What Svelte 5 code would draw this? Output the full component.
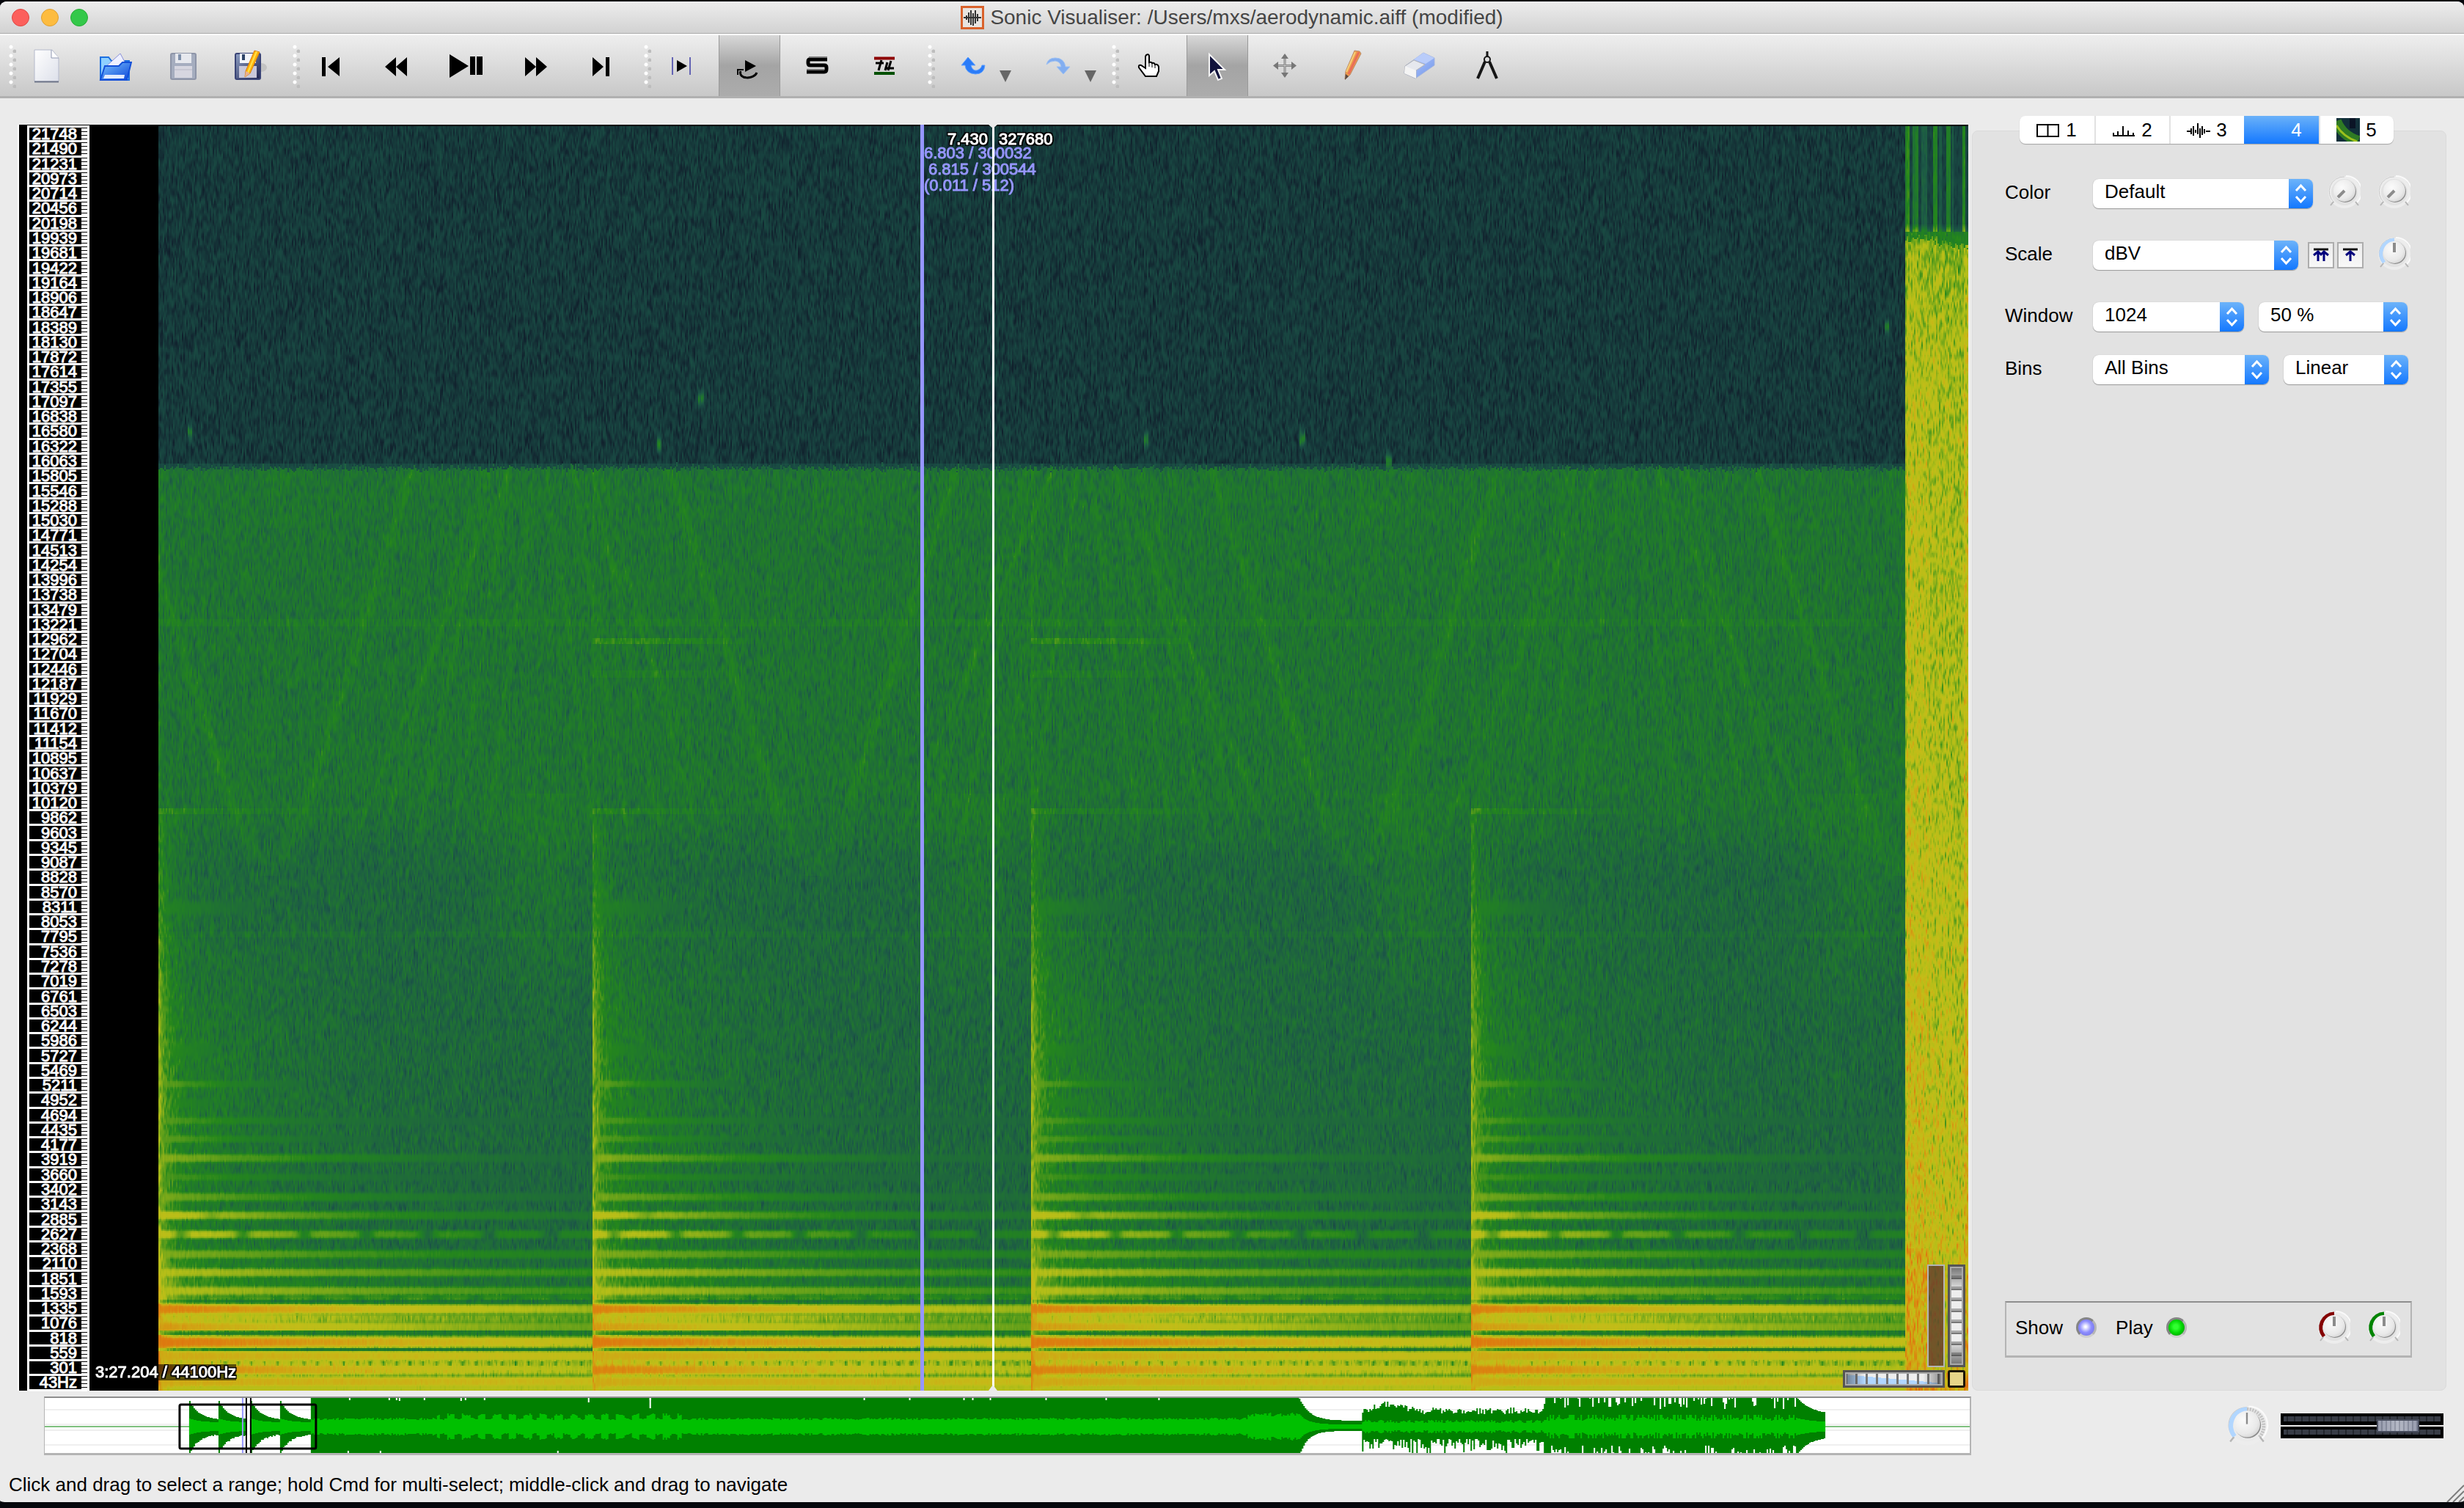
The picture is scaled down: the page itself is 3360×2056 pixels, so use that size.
<script lang="ts">
	import { onMount } from 'svelte';

	const FIRST_BIN = 505;
	const BIN_STEP = 6;
	const SAMPLE_RATE = 44100;
	const FFT_SIZE = 1024;

	const labels: string[] = [];
	for (let bin = FIRST_BIN; bin > 0; bin -= BIN_STEP) {
		labels.push(Math.floor((bin * SAMPLE_RATE) / FFT_SIZE) + (bin === 1 ? 'Hz' : ''));
	}

	const tabs = ['1', '2', '3', '4', '5'];
	let activeTab = $state('4');
	let looping = $state(true);
	let tool = $state('select');
	let showLayer = $state(true);
	let playLayer = $state(true);

	let canvas: HTMLCanvasElement;

	// small seeded generator so the view looks the same on every load
	function makeRandom(seed: number) {
		return () => {
			seed = (seed + 0x6d2b79f5) | 0;
			let t = Math.imul(seed ^ (seed >>> 15), 1 | seed);
			t = (t + Math.imul(t ^ (t >>> 7), 61 | t)) ^ t;
			return ((t ^ (t >>> 14)) >>> 0) / 4294967296;
		};
	}

	const colourStops: [number, number, number, number][] = [
		[0, 8, 10, 26],
		[0.2, 18, 38, 48],
		[0.3, 24, 68, 64],
		[0.4, 28, 88, 70],
		[0.47, 31, 106, 58],
		[0.53, 32, 122, 42],
		[0.59, 36, 134, 28],
		[0.7, 104, 162, 26],
		[0.8, 180, 190, 24],
		[0.86, 196, 188, 24],
		[0.92, 208, 166, 20],
		[0.97, 218, 134, 16],
		[1.05, 226, 104, 14]
	];

	function colourFor(v: number) {
		for (let i = 1; i < colourStops.length; i++) {
			const b = colourStops[i];
			if (v <= b[0]) {
				const a = colourStops[i - 1];
				const k = Math.max(0, (v - a[0]) / (b[0] - a[0]));
				return [a[1] + (b[1] - a[1]) * k, a[2] + (b[2] - a[2]) * k, a[3] + (b[3] - a[3]) * k];
			}
		}
		return [226, 104, 14];
	}

	// y, level at the hit, level at the end, decay, half height
	const partials = [
		[1237, 0.57, 0.44, 6, 10],
		[1431, 0.62, 0.44, 7, 9],
		[1462, 0.62, 0.44, 14, 6],
		[1477, 0.69, 0.45, 5, 5],
		[1503, 0.6, 0.45, 6, 6],
		[1527, 0.67, 0.46, 4, 5],
		[1552, 0.68, 0.45, 4, 5],
		[1578, 0.74, 0.45, 2.2, 6],
		[1604, 0.65, 0.45, 3, 5],
		[1631, 0.72, 0.46, 2.2, 6],
		[1656, 0.83, 0.48, 2, 6],
		[1682, 0.83, 0.5, 1.6, 6],
		[1709, 0.73, 0.5, 1.4, 6],
		[1734, 0.8, 0.54, 1.3, 6],
		[1759, 0.8, 0.55, 1.2, 6],
		[1769, 0.66, 0.55, 1, 5],
		[1784, 0.98, 0.64, 1, 7],
		[1796, 0.86, 0.58, 1.1, 6],
		[1808, 0.94, 0.62, 1.3, 7],
		[1829, 1, 0.78, 1.2, 8],
		[1848, 0.91, 0.82, 1.2, 8],
		[1859, 0.87, 0.72, 1.2, 6],
		[1867, 0.98, 0.7, 1.1, 7],
		[1883, 0.91, 0.85, 1.1, 8],
		[1893, 0.82, 0.79, 1, 8]
	];
	const hits = [216, 807, 1406, 2005, 2604];
	const blips = [[258, 588], [898, 605], [955, 543], [1562, 598], [1775, 598], [1893, 628], [2572, 445]];
	const thinSweeps = [[128, 0.42], [162, 0.27], [209, 0.19], [255, 0.15], [300, 0.13]];
	const tailStripes = [[2600, 0.6, 2], [2609, 0.5, 2], [2613, 0.54, 1], [2623, 0.42, 4], [2638, 0.57, 2], [2645, 0.4, 1], [2656, 0.54, 2], [2662, 0.4, 1], [2677, 0.58, 2]];

	function drawSpectrogram() {
		const w = 1281;
		const h = 863;
		canvas.width = w;
		canvas.height = h;
		const ctx = canvas.getContext('2d')!;
		const image = ctx.createImageData(w, h);
		const random = makeRandom(11);
		const binCount = 516;
		const raw = new Float32Array(w * binCount);
		for (let i = 0; i < raw.length; i++) {
			raw[i] = Math.max(-2.8, Math.log(-Math.log(random() + 1e-9) + 1e-9) + 0.4);
		}
		// neighbouring bins leak into each other, which stretches the grain vertically
		const noise = new Float32Array(raw.length);
		for (let i = w; i < raw.length - w; i++) {
			noise[i] = raw[i] * 0.6 + raw[i - w] * 0.4 + raw[i + w] * 0.4;
		}
		for (let px = 0; px < w; px++) {
			const x = 122 + px * 2;
			let hit = 0;
			while (hit < 3 && x >= hits[hit + 1]) hit++;
			const t = (x - hits[hit]) / 598;
			const band = x >= 2598;
			for (let py = 0; py < h; py++) {
				const y = 170 + py * 2;
				const o = (py * w + px) * 4;
				image.data[o + 3] = 255;
				if (x < 216 || py < 1) continue;

				const binPos = (py * 2) / 3.377;
				const bin = Math.floor(binPos);
				const k = binPos - bin;
				const n = noise[(bin + 1) * w + px] * (1 - k) + noise[(bin + 2) * w + px] * k;

				let v: number;
				let spread = 0.034;
				if (band) {
					if (y < 316) {
						v = 0.3;
						for (const [sx, level, half] of tailStripes) {
							if (Math.abs(x - sx) <= half) v = Math.max(v, level);
						}
						v += Math.max(0, y - 304) * 0.015;
						spread = 0.02;
					} else if (y < 326 + n * 4 + (x > 2640 ? 8 : 0)) {
						v = 0.57;
					} else {
						const side = (x - 2598) / 86;
						v = 0.77 + Math.min(0.05, (y - 330) * 0.0003) - side * 0.035;
						if (side > 0.92) v += 0.07;
						if (side < 0.35 && y > 600) v += 0.015;
						if (y > 1000) v += Math.min(0.06, (y - 1000) * 0.00008);
						if (y > 1700 && side < 0.35) v += 0.04;
						if (y > 1870) v += 0.06;
						spread = 0.052;
					}
					if (px * 2 + 122 < 2600) v -= 0.05;
				} else if (y < 638 + n * 3) {
					v = 0.268;
					if (y > 630) v += 0.06;
					for (const [bx, by] of blips) {
						if (Math.abs(x - bx) < 4) v += 0.26 * Math.exp(-(((y - by) / 10) ** 2));
					}
				} else {
					// background floor dips through the mids and climbs again near the bottom
					v = y < 1080 ? 0.505 : 0.505 - Math.min(0.052, (y - 1080) * 0.0005);
					const phase = (((x - 366) % 741) + 741) % 741;
					if (y < 720) v += 0.014 * Math.exp(-((phase / 60) ** 2));
					const side = Math.exp(-t * 4);
					if (y > 1080) v += side * Math.min(0.12, (y - 1080) * 0.0003);
					if (y > 1080) v += 0.045 * Math.exp(-(((t - 0.88) / 0.12) ** 2)) * Math.exp(-(((y - 1200) / 160) ** 2));
					const burst = y > 1100 ? 0.08 + Math.min(0.12, (y - 1100) * 0.0005) : 0.05;
					v += burst * Math.exp(-t * (y > 1100 ? 50 : 180));
					if (y > 1690) v += Math.min(0.12, (y - 1690) * 0.0016) * Math.exp(-t * 1.2);
					if (y > 1774) v += 0.07;

					// sweeps
					if (y < 1200) {
						const c = Math.round((x - 366) / 741);
						for (let m = c - 1; m <= c + 1; m++) {
							const off = Math.abs(x - (366 + m * 741));
							const rise = 1180 - y;
							if (rise > -14) {
								const d = Math.sqrt((Math.max(0, rise) + 110) ** 2 - 12100) / 3.3;
								const u = (off - d) / (rise < 80 ? 14 : 7);
								if (Math.abs(u) < 3) v += (rise < 80 ? 0.035 : 0.05) * Math.exp(-u * u);
							}
							if (y < 1150) {
								for (const [shift, slope] of thinSweeps) {
									const u = (off - shift - (1115 - y) * slope) / 4;
									if (Math.abs(u) < 3) v += 0.035 * Math.exp(-u * u);
								}
							}
						}
					}
					if (Math.abs(y - 848) < 5) v += 0.025;
					if (Math.abs(y - 873) < 5 && (hit === 1 || hit === 2)) v += 0.09 * Math.exp(-((t / 0.3) ** 4));
					if (Math.abs(y - 918) < 5 && (hit === 1 || hit === 2)) v += 0.035 * Math.exp(-((t / 0.3) ** 4));
					if (Math.abs(y - 1105) < 5) v += 0.06 * Math.exp(-((t / 0.3) ** 2));
					if (Math.abs(y - 1273) < 5) v += 0.02;

					for (let i = 0; i < partials.length; i++) {
						const p = partials[i];
						const dy = Math.abs(y - p[0]) / p[4];
						if (dy > 2) continue;
						let level = p[2] + (p[1] - p[2]) * Math.exp(-((t * p[3]) ** 1.3));
						if (p[0] === 1682) level -= 0.15 * Math.pow(Math.abs(Math.cos(((t * 598 - 30) * Math.PI) / 84)), 14);
						if (p[0] === 1769) level -= 0.08 * Math.pow(Math.abs(Math.cos((t * 598 * Math.PI) / 54)), 8);
						if (p[0] === 1656) level -= 0.06 * Math.exp(-(((t - 0.12) / 0.02) ** 2));
						const shape = Math.exp(-(dy ** 4));
						const lift = (level - v) * shape;
						if (lift > 0) {
							v += lift;
							spread = 0.034 - 0.026 * shape;
						}
					}
					if (Math.abs(y - 1816) < 3) v = Math.max(0.54, v - 0.17);
					if (Math.abs(y - 1839) < 3) v = Math.max(0.53, v - 0.22 + 0.12 * Math.exp(-t * 8));
					if (Math.abs(y - 1774) < 3) v = Math.max(0.5, v - 0.08);
					if (Math.abs(y - 1858) < 4 && t > 0.12) v -= 0.14 * Math.max(0, Math.cos((x * Math.PI) / 9)) ** 3;
					if (y > 1700 && spread > 0.02) spread = 0.028;
				}
				const c = colourFor(v + n * spread);
				image.data[o] = c[0];
				image.data[o + 1] = c[1];
				image.data[o + 2] = c[2];
			}
		}
		ctx.putImageData(image, 0, 0);
	}

	const overviewStart = 61;

	function buildOverview() {
		const random = makeRandom(5);
		let peakTop = '';
		let peakBottom = '';
		let meanTop = '';
		let meanBottom = '';
		for (let x = 258; x < 2490; x += 2) {
			let up: number;
			let down: number;
			let mean: number;
			if (x < 424) {
				const start = x < 298 ? 258 : x < 342 ? 298 : x < 382 ? 342 : 382;
				up = 9 + 26 * Math.exp(-(x - start) / 13);
				down = up + random() * 2;
				mean = 6 + 5 * Math.exp(-(x - start) / 12);
			} else if (x < 1772) {
				up = random() < 0.02 ? 36 : 40;
				down = random() < 0.02 ? 36 : 40;
				mean = 9 + random() * 3;
				if (x > 594 && x < 930 && x % 21 < 11) mean = 15 + random() * 3;
				if (x > 1700) mean = 14 + random() * 5;
			} else if (x < 1858) {
				up = 8 + 30 * Math.exp(-(x - 1772) / 14);
				down = 6 + 34 * Math.exp(-(x - 1772) / 11);
				mean = 3 + 14 * Math.exp(-(x - 1772) / 12);
			} else if (x < 2106) {
				up = 17 + random() * 9 + 10 * Math.exp(-(((x - 1895) / 22) ** 2));
				down = 17 + random() ** 2 * 20;
				mean = 5 + random() * 4;
			} else if (x < 2450) {
				up = random() < 0.3 ? 24 + random() * 14 : 40;
				down = random() < 0.35 ? 26 + random() * 12 : 40;
				mean = random() < 0.3 ? 16 : 8 + random() * 5;
			} else {
				up = 16 + 24 * Math.exp(-(x - 2450) / 20);
				down = 14 + 26 * Math.exp(-(x - 2450) / 16);
				mean = 6 + 6 * Math.exp(-(x - 2450) / 20);
			}
			const px = x - overviewStart;
			peakTop += `L${px} ${Math.round(39 - up)}H${px + 2}`;
			peakBottom = `L${px + 2} ${Math.round(39 + down)}H${px}` + peakBottom;
			meanTop += `L${px} ${Math.round(39 - mean)}H${px + 2}`;
			meanBottom = `L${px + 2} ${Math.round(39 + mean)}H${px}` + meanBottom;
		}
		const from = `M${258 - overviewStart} 39`;
		return { peak: from + peakTop + peakBottom + 'Z', mean: from + meanTop + meanBottom + 'Z' };
	}

	const overview = buildOverview();

	onMount(drawSpectrogram);
</script>

{#snippet knob(label: string, value: number, arc: string, arcColour: string, big: boolean)}
	<label class="knob" class:big>
		<svg viewBox="0 0 44 50" aria-hidden="true">
			<circle cx="22" cy="25" r="20" fill="none" stroke="#ededed" stroke-width="4" />
			<path d="M8 39A20 20 0 0 1 22 4" fill="none" stroke="#c9c9c9" stroke-width="1" />
			<path d="M24 3A21 21 0 0 1 38 40" fill="none" stroke="#fafafa" stroke-width="2" />
			{#if arc}
				<path d={arc} fill="none" stroke={arcColour} stroke-width="5" />
			{/if}
			{#if big}
				<path d="M22 6A19 19 0 0 1 36 38" fill="none" stroke="#c4c4c4" stroke-width="4" stroke-dasharray="2 1" />
			{/if}
			<circle cx="23" cy="24" r="15" fill="#8a8a8a" />
			<circle cx="22" cy="23" r="15" fill="url(#knobFace)" />
			<path d={value > 0 ? 'M22 23V10' : 'M22 23L13 32'} stroke="#8c8c8c" stroke-width={big ? 2 : 4} />
			<path d="M7 38L3 43M37 38L41 43" stroke="#b5b5b5" stroke-width="2" />
		</svg>
		<input type="range" min="0" max="100" {value} aria-label={label} />
	</label>
{/snippet}

{#snippet combo(id: string, label: string, options: string[], size: string)}
	<span class="combo {size}">
		<select {id} aria-label={label}>
			{#each options as option}
				<option>{option}</option>
			{/each}
		</select>
		<span class="stepper" aria-hidden="true">
			<svg viewBox="0 0 33 40"><path d="M10 16L16.500 9L23 16M10 24L16.500 31L23 24" fill="none" stroke="#fff" stroke-width="3" /></svg>
		</span>
	</span>
{/snippet}

<svg class="defs" aria-hidden="true">
	<defs>
		<radialGradient id="knobFace" cx=".38" cy=".35" r=".75">
			<stop offset="0" stop-color="#fbfbfb" /><stop offset=".7" stop-color="#e9e9e9" /><stop offset="1" stop-color="#cfcfcf" />
		</radialGradient>
		<linearGradient id="paper" x2="1" y2="1"><stop offset="0" stop-color="#fff" /><stop offset="1" stop-color="#dde0ea" /></linearGradient>
		<linearGradient id="blue" x2="1" y2="1"><stop offset="0" stop-color="#7cc4ff" /><stop offset="1" stop-color="#0a44d8" /></linearGradient>
		<linearGradient id="disk" x2="1" y2="1"><stop offset="0" stop-color="#8fa0c4" /><stop offset="1" stop-color="#1e2350" /></linearGradient>
		<linearGradient id="rubber" x2="1" y2="1"><stop offset="0" stop-color="#bcd0ff" /><stop offset="1" stop-color="#7296ea" /></linearGradient>
	</defs>
</svg>

<div class="window">
	<header class="titlebar">
		<div class="lights">
			<button class="light close" aria-label="Close"></button>
			<button class="light minimise" aria-label="Minimise"></button>
			<button class="light zoom" aria-label="Zoom"></button>
		</div>
		<h1>
			<svg viewBox="0 0 32 32" aria-hidden="true">
				<rect x="1.500" y="1.500" width="29" height="29" fill="#e8e4e0" stroke="#d9622b" stroke-width="3" />
				<path d="M4 16H28M8 13V19M11 9V23M14 6V26M17 10V27M20 6V24M23 11V21" fill="none" stroke="#333" stroke-width="2" />
			</svg>
			Sonic Visualiser: /Users/mxs/aerodynamic.aiff (modified)
		</h1>
	</header>

	<nav class="toolbar">
		<div class="group">
			<span class="grip"></span>
			<button class="tool" aria-label="New session">
				<svg viewBox="0 0 48 48"><path d="M7 2H31L40 13V45H7Z" fill="url(#paper)" stroke="#b4b9cb" /><path d="M30 2V13H40" fill="#fff" stroke="#8f97b0" /><path d="M7 45.500H40" stroke="#6d7488" stroke-width="2" /></svg>
			</button>
			<button class="tool" aria-label="Open">
				<svg viewBox="0 0 48 48"><path d="M5 12H16L20 17H44V43H5Z" fill="#8fd0ff" stroke="#1c6fe0" stroke-width="2" /><path d="M12 25L32 7L40 22V34H12Z" fill="#eef0ff" stroke="#8a90d8" /><path d="M11 24H30L35 19H47L41 43H5Z" fill="url(#blue)" stroke="#1450d8" stroke-width="2" /><path d="M11 36H38L37 41H9Z" fill="#e4ecff" /></svg>
			</button>
			<button class="tool" aria-label="Save">
				<svg viewBox="0 0 48 48"><rect x="9" y="7" width="34" height="35" rx="2" fill="#a5adbf" stroke="#8e95a8" stroke-width="2" /><rect x="15" y="7" width="22" height="13" fill="#e6e8ee" /><rect x="19" y="8" width="4" height="8" fill="#7f90ab" /><rect x="14" y="24" width="24" height="16" fill="#d6d6e0" /><path d="M14 29H38" stroke="#b9b9c6" /></svg>
			</button>
			<button class="tool" aria-label="Save as">
				<svg viewBox="0 0 48 48"><ellipse cx="40" cy="26" rx="8" ry="6" fill="#c3c3c3" /><rect x="5" y="7" width="34" height="35" rx="2" fill="url(#disk)" stroke="#3a4476" stroke-width="2" /><rect x="11" y="7" width="22" height="13" fill="#f2f5fb" /><rect x="14" y="8" width="4" height="8" fill="#2e4468" /><rect x="10" y="24" width="24" height="16" fill="#c9c8da" /><path d="M31 3L38 5L25 34L18 39L19 31Z" fill="#ffb30a" stroke="#d87c10" /><path d="M34 4L22 33" stroke="#ffe04a" stroke-width="2" /><path d="M19 31L25 34L18 39Z" fill="#e8b090" /></svg>
			</button>
		</div>

		<div class="group">
			<span class="grip"></span>
			<button class="tool" aria-label="Rewind to start"><svg viewBox="0 0 48 48"><path d="M12 12H17V38H12ZM36 12V38L20 25Z" /></svg></button>
			<button class="tool" aria-label="Rewind"><svg viewBox="0 0 48 48"><path d="M21 12V38L6 25ZM36 12V38L21 25Z" /></svg></button>
			<button class="tool" aria-label="Play / Pause"><svg viewBox="0 0 48 48"><path d="M2 8L28 24L2 40ZM30 11H37V36H30ZM39 11H47V36H39Z" /></svg></button>
			<button class="tool" aria-label="Fast forward"><svg viewBox="0 0 48 48"><path d="M13 12L28 25L13 38ZM28 12L43 25L28 38Z" /></svg></button>
			<button class="tool" aria-label="Fast forward to end"><svg viewBox="0 0 48 48"><path d="M13 12L28 25L13 38ZM31 12H36V38H31Z" /></svg></button>
		</div>

		<div class="group">
			<span class="grip"></span>
			<button class="tool" aria-label="Constrain playback to selection"><svg viewBox="0 0 48 48"><path d="M17 16L31 24L17 32Z" /><path d="M11 12V36M35 12V36" stroke="#6464b4" stroke-width="2" /></svg></button>
			<button class="tool" class:pressed={looping} aria-label="Loop playback" onclick={() => (looping = !looping)}>
				<svg viewBox="0 0 48 48"><path d="M18 16L33 24L18 32Z" /><path d="M12 31C8 42 30 43 34 33" fill="none" stroke="#000" stroke-width="3" /><path d="M8 36V29H16" fill="none" stroke="#000" stroke-width="2" /></svg>
			</button>
			<button class="tool" aria-label="Solo current pane"><svg viewBox="0 0 48 48"><path d="M38 15H14Q12 15 12 18V20Q12 23 15 23H34Q37 23 37 26V28Q37 32 34 32H10" fill="none" stroke="#000" stroke-width="5" /><path d="M13 12H38M10 29H34" stroke="#777" stroke-width="2" /></svg></button>
			<button class="tool" aria-label="Align file timelines"><svg viewBox="0 0 48 48"><path d="M10 13.500H38" stroke="#8e0000" stroke-width="4" /><path d="M10 34H38" stroke="#005000" stroke-width="4" /><path d="M12 20H23M20 16L16 30M33 17L29 30M26 27H37M28 19L25 30" stroke="#000" stroke-width="3" /></svg></button>
		</div>

		<div class="group">
			<span class="grip"></span>
			<button class="tool menu" aria-label="Undo"><svg viewBox="0 0 48 48"><path d="M17 12L27 23H21Q23 31 29 30Q35 28 36 23H40Q39 35 27 35Q14 34 13 23H8Z" fill="#2b7cf8" stroke="#5fa0ff" /></svg><span class="arrow"></span></button>
			<button class="tool menu" aria-label="Redo"><svg viewBox="0 0 48 48"><path d="M8 22Q10 13 20 13Q32 13 34 25H40L31 35L22 25H28Q27 18 20 17Q13 17 8 22Z" fill="#83aef0" stroke="#9cc0f4" /></svg><span class="arrow"></span></button>
		</div>

		<div class="group">
			<span class="grip"></span>
			<button class="tool" class:pressed={tool === 'navigate'} aria-label="Navigate" onclick={() => (tool = 'navigate')}>
				<svg viewBox="0 0 48 48"><path d="M19 9Q22 7 23 10V19Q26 18 27 20Q30 19 31 22Q35 21 36 25V31L33 38H18L9 26Q8 22 12 23L18 27V11Z" fill="#fff" stroke="#000" stroke-width="2" /><path d="M27 20V26M31 22V27M23 19V25" stroke="#000" /></svg>
			</button>
			<button class="tool" class:pressed={tool === 'select'} aria-label="Select" onclick={() => (tool = 'select')}>
				<svg viewBox="0 0 48 48"><path d="M13 8V37L20 31L25 43L30 41L25 29H34Z" fill="#10123c" stroke="#f4f4f4" stroke-width="2" /></svg>
			</button>
			<button class="tool" class:pressed={tool === 'edit'} aria-label="Edit" onclick={() => (tool = 'edit')}>
				<svg viewBox="0 0 48 48"><path d="M24 9V38M10 23.500H38" stroke="#808080" stroke-width="3" /><path d="M24 9V38M10 23.500H38" stroke="#c8c8c8" /><path d="M24 7L29 14H19ZM24 40L29 33H19ZM8 23.500L15 18V29ZM40 23.500L33 18V29Z" fill="#777" /></svg>
			</button>
			<button class="tool" class:pressed={tool === 'draw'} aria-label="Draw" onclick={() => (tool = 'draw')}>
				<svg viewBox="0 0 48 48"><path d="M27 3L34 4L36 7L21 36L14 42L15 31Z" fill="#ee9a4c" stroke="#b88a68" /><path d="M33 5L19 35" stroke="#e86e58" stroke-width="3" /><path d="M28 5L16 32" stroke="#f5cf78" stroke-width="2" /><path d="M15 35L14 43L19 38Z" fill="#5a4a42" /></svg>
			</button>
			<button class="tool" class:pressed={tool === 'erase'} aria-label="Erase" onclick={() => (tool = 'erase')}>
				<svg viewBox="0 0 48 48"><path d="M29 6L44 13V23L18 41L3 34L4 24Z" fill="url(#rubber)" stroke="#a3b4dc" /><path d="M29 6L44 13L32 21L16 15Z" fill="#b9ccfa" /><path d="M4 24L16 16L31 22L19 30V41L3 34Z" fill="#e6e8ee" stroke="#b5b5b5" /><path d="M4 24L19 30V41L3 34Z" fill="#f4f4f4" /></svg>
			</button>
			<button class="tool" class:pressed={tool === 'measure'} aria-label="Measure" onclick={() => (tool = 'measure')}>
				<svg viewBox="0 0 48 48"><path d="M24 4V11" stroke="#161616" stroke-width="3" /><path d="M21 18L11 41M27 18L37 41" fill="none" stroke="#161616" stroke-width="4" /><circle cx="24" cy="15" r="4" fill="#ddd" stroke="#161616" stroke-width="2" /></svg>
			</button>
		</div>
	</nav>

	<main>
		<section class="pane" aria-label="Spectrogram pane">
			<div class="edge"></div>
			<ol class="scale">
				{#each labels as label}
					<li><span class="freq">{label}</span><span class="ticks"></span></li>
				{/each}
			</ol>
			<div class="plot">
				<canvas bind:this={canvas}></canvas>
				<div class="selection"></div>
				<div class="readout">
					<span>6.803 / 300032</span>
					<span class="indent">6.815 / 300544</span>
					<span>(0.011 / 512)</span>
				</div>
				<div class="playhead">
					<span class="time">7.430</span>
					<span class="frame">327680</span>
				</div>
				<span class="duration">3:27.204 / 44100Hz</span>
				<div class="zoomers">
					<span class="thumb-box"></span>
					<span class="wheel vertical"></span>
					<span class="wheel horizontal"></span>
					<button class="reset" aria-label="Reset zoom"></button>
				</div>
			</div>
		</section>

		<aside>
			<div class="tabs" role="tablist">
				{#each tabs as tab}
					<button role="tab" class="tab" class:active={activeTab === tab} aria-selected={activeTab === tab} onclick={() => (activeTab = tab)}>
						<svg viewBox="0 0 32 32" aria-hidden="true">
							{#if tab === '1'}
								<path d="M1 9H30V25H1ZM15.500 9V25" fill="none" stroke="#000" stroke-width="2" />
							{:else if tab === '2'}
								<path d="M1 24H31M2 24V20M8 24V18M15 24V11M22 24V17M29 24V20" fill="none" stroke="#000" stroke-width="2" />
							{:else if tab === '3'}
								<path d="M0 18H6M6 14V22M9 11V24M12 16V20M15 7V22M18 14V27M21 11V23M24 15V21M26 18H32" fill="none" stroke="#000" stroke-width="2" />
							{:else if tab === '5'}
								<rect width="32" height="32" fill="#12303a" />
								<path d="M18 0H26V14H18Z" fill="#0b1426" />
								<path d="M0 4Q8 24 30 31" fill="none" stroke="#2f7a24" stroke-width="14" />
								<path d="M0 10Q9 25 28 32" fill="none" stroke="#9cc01c" stroke-width="3" />
							{/if}
						</svg>
						{tab}
					</button>
				{/each}
			</div>
			<div class="properties">
				<div class="row">
					<label for="color">Color</label>
					{@render combo('color', 'Color', ['Default', 'White on Black', 'Black on White'], 'w300')}
					<span class="spacer"></span>
					{@render knob('Threshold', 0, '', '', false)}
					{@render knob('Colour rotation', 0, '', '', false)}
				</div>
				<div class="row">
					<label for="scale">Scale</label>
					{@render combo('scale', 'Scale', ['dBV', 'Linear', 'Meter'], 'w280')}
					<span class="spacer"></span>
					<span class="pair">
						<button class="mini" aria-label="Normalise columns"><svg viewBox="0 0 32 32"><path d="M6 8H26" stroke="#111" stroke-width="3" /><path d="M12 11V24M20 11V24M6 16L12 11L16 15L20 11L26 16" fill="none" stroke="#00007c" stroke-width="3" /></svg></button>
						<button class="mini" aria-label="Normalise visible area"><svg viewBox="0 0 32 32"><path d="M6 8H26" stroke="#111" stroke-width="3" /><path d="M16 11V24M10 16L16 11L22 16" fill="none" stroke="#00007c" stroke-width="3" /></svg></button>
					</span>
					{@render knob('Gain', 50, 'M8 37A19 19 0 0 1 22 6', '#b1d6ff', false)}
				</div>
				<div class="row">
					<label for="window">Window</label>
					{@render combo('window', 'Window', ['1024', '2048', '4096'], 'w206')}
					{@render combo('overlap', 'Overlap', ['50 %', '75 %', '87.5 %'], 'w203')}
				</div>
				<div class="row tight">
					<label for="bins">Bins</label>
					{@render combo('bins', 'Bins', ['All Bins', 'Peak Bins', 'Frequencies'], 'w240')}
					{@render combo('binScale', 'Frequency scale', ['Linear', 'Log'], 'w170')}
				</div>
				<div class="layer-box">
					<label for="show">Show</label>
					<input id="show" class="led violet" type="checkbox" bind:checked={showLayer} />
					<label for="play">Play</label>
					<input id="play" class="led green" type="checkbox" bind:checked={playLayer} />
					<span class="spacer"></span>
					{@render knob('Playback pan', 50, 'M8 37A19 19 0 0 1 22 6', '#840000', false)}
					{@render knob('Playback gain', 50, 'M8 37A19 19 0 0 1 22 6', '#008400', false)}
				</div>
			</div>
		</aside>
	</main>

	<div class="bottom">
		<div class="overview">
			<svg viewBox="0 0 2626 75" preserveAspectRatio="none" aria-label="Overview waveform">
				<path d="M0 16H2626M0 36H2626M0 44H2626M0 64H2626" stroke="#efefef" stroke-width="2" />
				<path d="M0 39H2626" stroke="#80c080" stroke-width="2" />
				<path d={overview.peak} fill="#008000" />
				<path d={overview.mean} fill="#00c000" />
				<path d="M484 0V4M568 0V4M742 0V6M826 0V14M414 75V72M458 75V72M700 75V72" stroke="#fff" stroke-width="2" />
				<path d="M270 0V75" stroke="#9696ff" stroke-width="2" />
				<path d="M278 0V75" stroke="#fff" stroke-width="4" />
				<path d="M275 0V75M281 0V75" stroke="#000" stroke-width="2" />
				<rect x="184" y="9" width="186" height="60" rx="2" fill="none" stroke="#000" stroke-width="3" />
			</svg>
		</div>
		<span class="spacer"></span>
		{@render knob('Playback speed', 50, 'M8 37A19 19 0 0 1 22 6', '#b1d6ff', true)}
		<input class="fader" type="range" min="0" max="100" value="80" aria-label="Output level" />
	</div>

	<footer>
		<span>Click and drag to select a range; hold Cmd for multi-select; middle-click and drag to navigate</span>
		<svg viewBox="0 0 24 24" aria-hidden="true"><path d="M1 24L24 1M9 24L24 9M17 24L24 17" stroke="#7d7d7d" stroke-width="2" /></svg>
	</footer>
</div>

<style>
	:global(body) {
		background: #05070c;
	}

	.defs {
		position: absolute;
		width: 0;
		height: 0;
	}

	.window {
		display: flex;
		flex-direction: column;
		box-sizing: border-box;
		height: 100vh;
		border: 0 solid #05070c;
		border-width: 2px 0 8px;
		border-radius: 10px;
		background: #ebebeb;
		overflow: hidden;
		font-family: 'Liberation Sans', Arial, sans-serif;
		font-size: 26px;
		line-height: 30px;
		color: #000;
	}

	button,
	select,
	input {
		margin: 0;
		padding: 0;
		border: 0;
		background: none;
		font: inherit;
		color: inherit;
	}

	.spacer {
		flex: 1;
	}

	/* title bar */
	.titlebar {
		display: grid;
		grid-template-columns: 1fr auto 1fr;
		align-items: center;
		height: 43px;
		background: linear-gradient(#ededed, #d2d2d2);
		border-bottom: 1px solid #ababab;
	}

	.lights {
		display: flex;
		gap: 16px;
		padding-left: 16px;
	}

	.light {
		box-sizing: border-box;
		width: 24px;
		height: 24px;
		border-radius: 50%;
		border: 1px solid #de4844;
		background: #fc605c;
	}

	.light.minimise {
		border-color: #dda033;
		background: #fdbc40;
	}

	.light.zoom {
		border-color: #28ac36;
		background: #34c84a;
	}

	h1 {
		display: flex;
		align-items: center;
		gap: 8px;
		margin: 0;
		font-size: 28px;
		font-weight: normal;
		color: #454545;
	}

	h1 svg {
		width: 32px;
		height: 32px;
	}

	/* toolbar */
	.toolbar {
		display: flex;
		gap: 17px;
		height: 83px;
		padding-left: 12px;
		border-top: 2px solid #fff;
		border-bottom: 3px solid #b0b0b0;
		background: linear-gradient(#eeeeee, #c8c8c8);
	}

	.group {
		display: flex;
		gap: 8px;
	}

	.grip {
		align-self: center;
		width: 10px;
		height: 60px;
		margin-right: -8px;
		background-image: radial-gradient(circle at 3px 4px, #fff 2px, transparent 3px), radial-gradient(circle at 8px 10px, #bdbdbd 2px, transparent 3px);
		background-size: 12px 12px;
	}

	.tool {
		display: flex;
		align-items: center;
		justify-content: center;
		width: 84px;
	}

	.tool svg {
		width: 48px;
		height: 48px;
	}

	.tool.pressed {
		background: linear-gradient(#d8d8d8, #a4a4a4 50%, #acacac);
		box-shadow: inset 1px 0 #999, inset -1px 0 #999;
	}

	.tool.menu {
		box-sizing: border-box;
		justify-content: flex-start;
		gap: 12px;
		width: 108px;
		padding-left: 28px;
	}

	.menu .arrow {
		margin-top: 28px;
		border: 8px solid transparent;
		border-top: 16px solid #666;
		border-bottom: 0;
	}

	/* pane */
	main {
		display: flex;
		flex: 1;
		gap: 5px;
		min-height: 0;
		padding: 24px 24px 0;
	}

	.pane {
		display: flex;
		flex: 1;
		min-width: 0;
		margin-top: 12px;
		background: #000;
	}

	.edge {
		width: 11px;
		border-left: 2px solid #fff;
	}

	.scale {
		display: flex;
		flex-direction: column;
		width: 79px;
		margin: 1px 0 0;
		padding: 3px 3px 0;
		list-style: none;
		background: #fff;
		font-size: 22px;
		color: #fff;
	}

	.scale li {
		display: flex;
		flex: 1;
		min-height: 0;
		border-bottom: 3px solid #fff;
	}

	.freq {
		display: flex;
		align-items: center;
		justify-content: flex-end;
		width: 65px;
		padding-right: 6px;
		line-height: 17px;
		background: #000;
		-webkit-text-stroke: 1px #fff;
	}

	.ticks {
		width: 8px;
		background: repeating-linear-gradient(#000 0 1px, #fff 1px 5px);
	}

	.plot {
		position: relative;
		flex: 1;
		min-width: 0;
		font-size: 22px;
		line-height: 22px;
	}

	canvas {
		position: absolute;
		inset: 0;
		width: 100%;
		height: 100%;
		image-rendering: pixelated;
	}

	.selection {
		position: absolute;
		top: 0;
		bottom: 0;
		left: 1133px;
		width: 5px;
		background: #9696ff;
	}

	.readout {
		position: absolute;
		top: 28px;
		left: 1138px;
		display: flex;
		flex-direction: column;
		color: #9696ff;
		-webkit-text-stroke: 1px #9696ff;
	}

	.indent {
		padding-left: 6px;
	}

	.playhead {
		position: absolute;
		top: 0;
		bottom: 0;
		left: 1231px;
		width: 3px;
		background: #fff;
	}

	.playhead::before,
	.playhead::after {
		content: '';
		position: absolute;
		top: 0;
		left: -5px;
		border: 6px solid transparent;
		border-top: 5px solid #ebebeb;
		border-bottom: 0;
	}

	.playhead::after {
		top: auto;
		bottom: 0;
		border-top: 0;
		border-bottom: 8px solid #ebebeb;
	}

	.time,
	.frame,
	.duration {
		position: absolute;
		color: #fff;
		-webkit-text-stroke: 1px #fff;
		text-shadow: -2px 0 #000, 2px 0 #000, 0 -2px #000, 0 2px #000, 2px 2px #000, -2px -2px #000, 2px -2px #000, -2px 2px #000;
	}

	.time {
		top: 9px;
		right: 9px;
	}

	.frame {
		top: 9px;
		left: 9px;
	}

	.duration {
		left: 8px;
		bottom: 14px;
		background: rgba(0, 0, 0, 0.55);
	}

	.zoomers {
		position: absolute;
		right: 4px;
		bottom: 4px;
		display: grid;
		grid-template-columns: 111px 24px 24px;
		grid-template-rows: 140px 24px;
		gap: 4px;
	}

	.thumb-box {
		grid-column: 2;
		box-sizing: border-box;
		border: 2px solid #b4b4b4;
		background: rgba(70, 30, 50, 0.65);
	}

	.wheel {
		box-sizing: border-box;
		border: 3px solid #555;
		box-shadow: inset 0 0 0 2px #aaa;
	}

	.wheel.vertical {
		grid-column: 3;
		background: linear-gradient(rgba(60, 60, 60, 0.7), transparent 25%, transparent 75%, rgba(60, 60, 60, 0.7)), repeating-linear-gradient(#777 0 2px, #eee 2px 12px, #aaa 12px 15px);
	}

	.wheel.horizontal {
		grid-column: 1 / 3;
		background: linear-gradient(90deg, rgba(60, 60, 60, 0.6), transparent 20%, transparent 80%, rgba(60, 60, 60, 0.6)), repeating-linear-gradient(90deg, #777 0 3px, transparent 3px 14px), linear-gradient(185deg, #eee 50%, #b1d6ff 50%);
	}

	.reset {
		grid-column: 3;
		box-sizing: border-box;
		border: 3px solid #1c1608;
		border-radius: 3px;
		background: #e6d488;
	}

	/* property boxes */
	aside {
		display: flex;
		flex-direction: column;
		width: 647px;
	}

	.tabs {
		display: flex;
		align-self: center;
		height: 38px;
		margin-right: 8px;
		margin-bottom: -18px;
		border-radius: 8px;
		background: #fff;
		box-shadow: 0 1px 1px #a5a5a5;
		z-index: 1;
		overflow: hidden;
	}

	.tab {
		display: flex;
		align-items: center;
		justify-content: center;
		gap: 8px;
		box-sizing: border-box;
		width: 102px;
		border-left: 2px solid #e2e2e2;
	}

	.tab:first-child {
		border-left: 0;
	}

	.tab svg {
		width: 32px;
		height: 32px;
	}

	.tab.active {
		border-color: transparent;
		background: linear-gradient(#6ab1f9, #1478ff) border-box;
		color: #fff;
	}

	.properties {
		display: flex;
		flex: 1;
		flex-direction: column;
		gap: 44px;
		padding: 65px 46px 44px 44px;
		border: 1px solid #dadada;
		border-radius: 8px;
		background: #e2e2e2;
	}

	.row {
		display: flex;
		align-items: center;
		height: 40px;
		padding-right: 2px;
		gap: 20px;
	}

	.row.tight {
		margin-top: -12px;
	}

	.row > label:first-child {
		width: 100px;
		margin-bottom: 4px;
	}

	.row .spacer {
		margin-left: -40px;
	}

	.row .knob {
		margin-bottom: 4px;
	}

	.combo {
		position: relative;
		display: flex;
		height: 40px;
		border-radius: 8px;
		background: #fff;
		box-shadow: 0 1px 1px #999, 0 0 1px #aaa;
		overflow: hidden;
	}

	.combo select {
		appearance: none;
		flex: 1;
		min-width: 0;
		padding: 0 0 6px 16px;
		outline: none;
	}

	.stepper {
		width: 33px;
		background: linear-gradient(#6cb3fa, #1478ff);
		pointer-events: none;
	}

	.stepper svg {
		display: block;
		width: 33px;
		height: 40px;
	}

	.w300 {
		width: 300px;
	}

	.w280 {
		width: 280px;
	}

	.w240 {
		width: 240px;
	}

	.w206 {
		width: 206px;
	}

	.w203 {
		width: 203px;
	}

	.w170 {
		width: 170px;
	}

	.pair {
		display: flex;
		gap: 4px;
	}

	.mini {
		box-sizing: border-box;
		width: 36px;
		height: 36px;
		border: 2px solid #adadad;
		background: linear-gradient(#ececec, #f8f8f8);
	}

	.mini svg {
		display: block;
		width: 32px;
		height: 32px;
	}

	.knob {
		position: relative;
		width: 44px;
		height: 50px;
	}

	.row .knob + .knob {
		margin-left: 4px;
	}

	.knob svg {
		display: block;
		width: 100%;
		height: 100%;
	}

	.knob.big {
		width: 60px;
		height: 60px;
	}

	.knob input {
		position: absolute;
		inset: 0;
		width: 100%;
		height: 100%;
		opacity: 0;
	}

	.layer-box {
		display: flex;
		align-items: center;
		gap: 24px;
		height: 72px;
		margin-top: auto;
		padding: 0 14px 0 12px;
		border: 2px solid #b4b4b4;
		border-top-color: #8e8e8e;
		border-bottom-width: 3px;
	}

	.layer-box label {
		margin-bottom: 4px;
	}

	.led {
		appearance: none;
		box-sizing: border-box;
		width: 28px;
		height: 28px;
		margin: 0 2px 4px -6px;
		border: 3px solid #858585;
		border-right-color: #b5b5b5;
		border-bottom-color: #cfcfcf;
		border-radius: 50%;
		background: #555;
	}

	.led.violet:checked {
		background: radial-gradient(circle at 45% 45%, #fff 1px, #8c8cff 8px, #6c6cd8);
	}

	.led.green:checked {
		background: radial-gradient(circle at 45% 45%, #30ff30 3px, #00d400 9px, #1c7c1c);
	}

	/* overview */
	.bottom {
		display: flex;
		align-items: center;
		gap: 16px;
		margin-top: 8px;
		padding: 0 28px 0 60px;
	}

	.overview {
		flex: 1;
		border: 1px solid #b4b4b4;
		border-width: 2px 2px 3px 1px;
		border-top-color: #8e8e8e;
		background: #fff;
	}

	.overview svg {
		display: block;
		width: 100%;
		height: 75px;
	}

	.bottom .spacer {
		flex: 0 0 314px;
	}

	.fader {
		appearance: none;
		width: 222px;
		height: 34px;
		background: linear-gradient(#000 4px, transparent 4px 11px, #000 11px 16px, #ebebeb 16px 18px, #000 18px 22px, transparent 22px 29px, #000 29px), linear-gradient(90deg, #000 4px, transparent 4px 218px, #000 218px), repeating-linear-gradient(90deg, #383c46 0 8px, #23262d 8px 10px);
	}

	.fader::-webkit-slider-thumb {
		appearance: none;
		width: 58px;
		height: 18px;
		border: 2px solid #474c5c;
		box-sizing: border-box;
		background: linear-gradient(90deg, #80859a80, #b9bdc980 50%, #80859a80), repeating-linear-gradient(90deg, #b0b4c2 0 4px, #74798a 4px 6px);
	}

	footer {
		display: flex;
		align-items: center;
		justify-content: space-between;
		height: 64px;
		padding-left: 12px;
	}

	footer span {
		margin-top: 16px;
	}

	footer svg {
		align-self: flex-end;
		width: 24px;
		height: 24px;
	}
</style>
